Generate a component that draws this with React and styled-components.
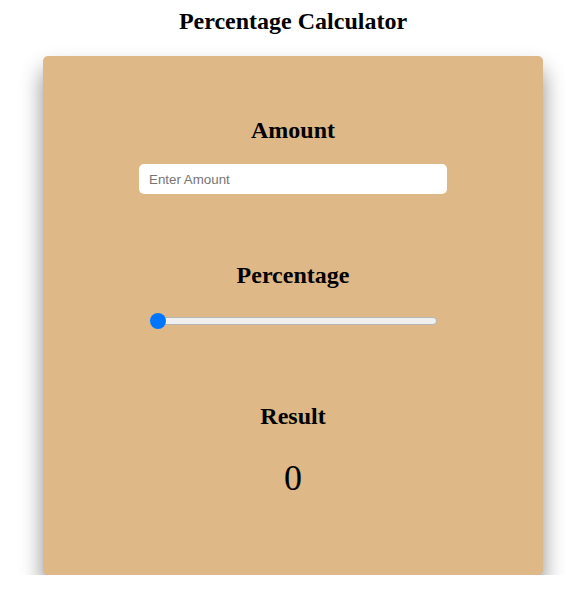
import React, { useState } from "react";
import styled, { createGlobalStyle } from "styled-components";

const Global = createGlobalStyle`
  body {
    margin: 8px;
    background: #ffffff;
    font-family: "Liberation Serif", "Times New Roman", serif;
    color: #000;
  }
`;

const Page = styled.div`
  width: 500px;
  padding-left: 35px;
`;

const Title = styled.h1`
  margin: 0 0 21px;
  font-size: 24px;
  font-weight: bold;
  line-height: normal;
  text-align: center;
`;

const Card = styled.div`
  background: #deb887;
  border-radius: 5px;
  box-shadow: 0 14px 22px rgba(0, 0, 0, 0.45);
  padding: 41px 0 40px;
  display: flex;
  flex-direction: column;
  align-items: center;
`;

const Section = styled.div`
  display: flex;
  flex-direction: column;
  align-items: center;
  margin-bottom: ${(p) => p.$gap || 0}px;
`;

const Heading = styled.h2`
  margin: 20px 0;
  font-size: 24px;
  font-weight: bold;
  line-height: normal;
`;

const AmountInput = styled.input`
  width: 308px;
  height: 30px;
  box-sizing: border-box;
  border: none;
  border-radius: 5px;
  padding: 0 10px;
  background: #fff;
  font-family: "Liberation Sans", Arial, sans-serif;
  font-size: 13.33px;
  outline: none;
  &::placeholder {
    color: #757575;
  }
`;

const SliderBox = styled.div`
  height: 24px;
  display: flex;
  align-items: center;
`;

const Range = styled.input`
  -webkit-appearance: none;
  appearance: none;
  width: 288px;
  height: 16px;
  margin: 0;
  background: transparent;
  &::-webkit-slider-runnable-track {
    height: 8px;
    box-sizing: border-box;
    background: #efefef;
    border: 1px solid #b5b5b5;
    border-radius: 4px;
  }
  &::-webkit-slider-thumb {
    -webkit-appearance: none;
    appearance: none;
    width: 16px;
    height: 16px;
    border-radius: 50%;
    background: #0075ff;
    border: none;
    margin-top: -5px;
  }
`;

const Result = styled.div`
  margin-top: 7px;
  margin-bottom: 36px;
  font-size: 36px;
  line-height: normal;
`;

export default function App() {
  const [amount, setAmount] = useState("");
  const [pct, setPct] = useState(0);
  const result = ((parseFloat(amount) || 0) * pct) / 100;
  return (
    <Page>
      <Global />
      <Title>Percentage Calculator</Title>
      <Card>
        <Section $gap={48}>
          <Heading>Amount</Heading>
          <AmountInput
            type="text"
            placeholder="Enter Amount"
            value={amount}
            onChange={(e) => setAmount(e.target.value)}
          />
        </Section>
        <Section $gap={50}>
          <Heading>Percentage</Heading>
          <SliderBox>
            <Range
              type="range"
              min="0"
              max="100"
              value={pct}
              onChange={(e) => setPct(Number(e.target.value))}
            />
          </SliderBox>
        </Section>
        <Section>
          <Heading>Result</Heading>
          <Result>{result}</Result>
        </Section>
      </Card>
    </Page>
  );
}
